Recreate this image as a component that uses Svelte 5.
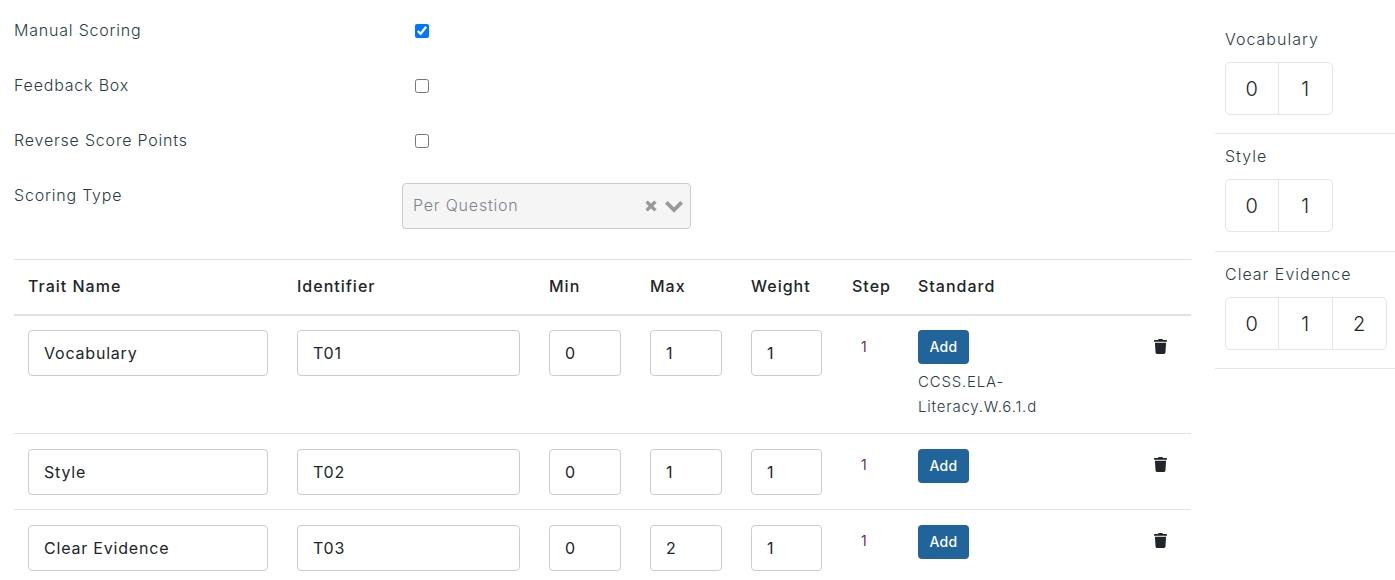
<script>
	const traits = [
		{ name: 'Vocabulary', id: 'T01', min: 0, max: 1, weight: 1, step: 1, standard: 'CCSS.ELA-Literacy.W.6.1.d' },
		{ name: 'Style', id: 'T02', min: 0, max: 1, weight: 1, step: 1 },
		{ name: 'Clear Evidence', id: 'T03', min: 0, max: 2, weight: 1, step: 1 }
	];

	const options = [
		{ label: 'Manual Scoring', checked: true },
		{ label: 'Feedback Box', checked: false },
		{ label: 'Reverse Score Points', checked: false }
	];

	// one cell per score point, from min to max
	const points = (t) => {
		const list = [];
		for (let i = t.min; i <= t.max; i++) list.push(i);
		return list;
	};
</script>

<div class="page">
	<main class="content">
		{#each options as opt}
			<div class="form-row">
				<span class="form-label">{opt.label}</span>
				<div class="check-wrap">
					<input type="checkbox" checked={opt.checked} />
				</div>
			</div>
		{/each}

		<div class="form-row type-row">
			<span class="form-label">Scoring Type</span>
			<div class="select">
				<span class="select-value">Per Question</span>
				<svg class="select-clear" viewBox="0 0 14 14" width="14" height="14" aria-hidden="true">
					<path d="M2.600 2.600 11.400 11.400M11.400 2.600 2.600 11.400" stroke="#999" stroke-width="3.400" fill="none" />
				</svg>
				<svg class="select-arrow" viewBox="0 0 20 13" width="20" height="13" aria-hidden="true">
					<path d="M2.400 2.400 10 10 17.600 2.400" stroke="#999" stroke-width="3.800" fill="none" />
				</svg>
			</div>
		</div>

		<table>
			<colgroup>
				<col class="c-name" />
				<col class="c-id" />
				<col class="c-num" />
				<col class="c-num" />
				<col class="c-num" />
				<col class="c-step" />
				<col class="c-std" />
				<col />
			</colgroup>
			<thead>
				<tr>
					<th>Trait Name</th>
					<th>Identifier</th>
					<th>Min</th>
					<th>Max</th>
					<th>Weight</th>
					<th>Step</th>
					<th>Standard</th>
					<th></th>
				</tr>
			</thead>
			<tbody>
				{#each traits as t}
					<tr>
						<td><input class="field" value={t.name} /></td>
						<td><input class="field" value={t.id} /></td>
						<td><input class="field" value={t.min} /></td>
						<td><input class="field" value={t.max} /></td>
						<td><input class="field" value={t.weight} /></td>
						<td class="step">{t.step}</td>
						<td>
							<button type="button" class="add">Add</button>
							{#if t.standard}
								<div class="standard">{t.standard}</div>
							{/if}
						</td>
						<td class="del">
							<svg viewBox="0 0 448 512" width="13" height="15" aria-hidden="true">
								<path
									fill="#212529"
									d="M432 32H312l-9.400-18.700A24 24 0 0 0 281.100 0H166.800a23.700 23.700 0 0 0-21.400 13.300L136 32H16A16 16 0 0 0 0 48v32a16 16 0 0 0 16 16h416a16 16 0 0 0 16-16V48a16 16 0 0 0-16-16zM53.200 467a48 48 0 0 0 47.900 45h245.800a48 48 0 0 0 47.900-45L416 128H32z"
								/>
							</svg>
						</td>
					</tr>
				{/each}
			</tbody>
		</table>
	</main>

	<aside class="side">
		{#each traits as t}
			<section class="side-block">
				<div class="side-title">{t.name}</div>
				<div class="points">
					{#each points(t) as p}
						<div class="point">{p}</div>
					{/each}
				</div>
			</section>
		{/each}
	</aside>
</div>

<style>
	:global(body) {
		margin: 0;
		background: #fff;
		overflow: hidden;
	}

	.page {
		display: flex;
		height: 580px;
		overflow: hidden;
		font-family: Inter, 'Open Sans', sans-serif;
		font-size: 16px;
		font-weight: 300;
		letter-spacing: 0.8px;
		color: #212529;
	}

	.content {
		width: 1177px;
		margin-left: 14px;
		padding-top: 3px;
	}

	.side {
		width: 180px;
		margin-left: 24px;
		padding-top: 16.7px;
	}

	.form-row {
		display: flex;
		align-items: flex-start;
		height: 55px;
	}

	.form-label {
		width: 388px;
		line-height: 55px;
		color: #2c3a47;
	}

	.check-wrap {
		padding-left: 13px;
		height: 55px;
		display: flex;
		align-items: center;
	}

	.check-wrap input {
		width: 14px;
		height: 14px;
		margin: 0;
		accent-color: #0075ff;
	}

	.type-row {
		height: 91px;
	}

	.select {
		display: flex;
		align-items: center;
		box-sizing: border-box;
		width: 289px;
		height: 46px;
		margin-top: 15px;
		padding: 0 6px 0 10px;
		background: #f5f5f5;
		border: 1px solid #ccc;
		border-radius: 4px;
	}

	.select-value {
		flex: 1;
		padding-bottom: 2px;
		color: #7d858c;
	}

	.select-arrow {
		margin-left: 6px;
	}

	table {
		width: 100%;
		table-layout: fixed;
		border-collapse: collapse;
		border-top: 1px solid #dee2e6;
	}

	.c-name { width: 268px; }
	.c-id { width: 252px; }
	.c-num { width: 101px; }
	.c-step { width: 66px; }
	.c-std { width: 220px; }

	th {
		height: 55px;
		padding: 0 14px 2px 15px;
		box-sizing: border-box;
		border-bottom: 2px solid #dee2e6;
		font-size: 16px;
		font-weight: 500;
		letter-spacing: 1px;
		text-align: left;
	}

	th:first-child,
	td:first-child {
		padding-left: 14px;
	}

	td {
		padding: 14px 14px 14px 15px;
		vertical-align: top;
		border-bottom: 1px solid #dee2e6;
	}

	tbody tr:nth-child(n + 2) td {
		padding-top: 15px;
	}

	tbody tr:last-child td {
		border-bottom: none;
	}

	td:nth-child(5) {
		padding-right: 15px;
	}

	.field {
		display: block;
		box-sizing: border-box;
		width: 100%;
		height: 46px;
		padding: 0 15px;
		border: 1px solid #ccc;
		border-radius: 4px;
		font: inherit;
		font-weight: 400;
		letter-spacing: 0.8px;
		color: #212529;
		background: #fff;
	}

	td.step,
	tbody tr:nth-child(n + 2) td.step {
		padding-left: 24px;
		padding-top: 21px;
		font-size: 14px;
		font-weight: 400;
		line-height: 20px;
		color: #6a2a5a;
	}

	.add {
		display: block;
		width: 51px;
		height: 34px;
		padding: 0;
		border: none;
		border-radius: 4px;
		background: #20649b;
		color: #fff;
		font: 500 14px Inter, 'Open Sans', sans-serif;
		letter-spacing: 0.3px;
	}

	.standard {
		margin: 5px 0 0;
		width: 130px;
		font-size: 15px;
		line-height: 25px;
		letter-spacing: 0.8px;
		color: #2c3a47;
	}

	td.del,
	tbody tr:nth-child(n + 2) td.del {
		padding-top: 23px;
		padding-left: 31px;
	}

	.del svg {
		display: block;
	}

	.side-block {
		height: 117.5px;
		box-sizing: border-box;
		border-bottom: 1px solid #e6e8ec;
		padding: 10px 0 0 10px;
	}

	.side-title {
		height: 24px;
		margin-bottom: 11px;
		line-height: 24px;
		letter-spacing: 1px;
		color: #2c3a47;
	}

	.points {
		display: inline-flex;
		border: 1px solid #e3e5ea;
		border-radius: 5px;
	}

	.point {
		box-sizing: border-box;
		width: 54px;
		height: 51px;
		line-height: 53px;
		text-align: center;
		font-size: 20px;
		border-left: 1px solid #e3e5ea;
	}

	.point:first-child {
		border-left: none;
		width: 52px;
	}
</style>
